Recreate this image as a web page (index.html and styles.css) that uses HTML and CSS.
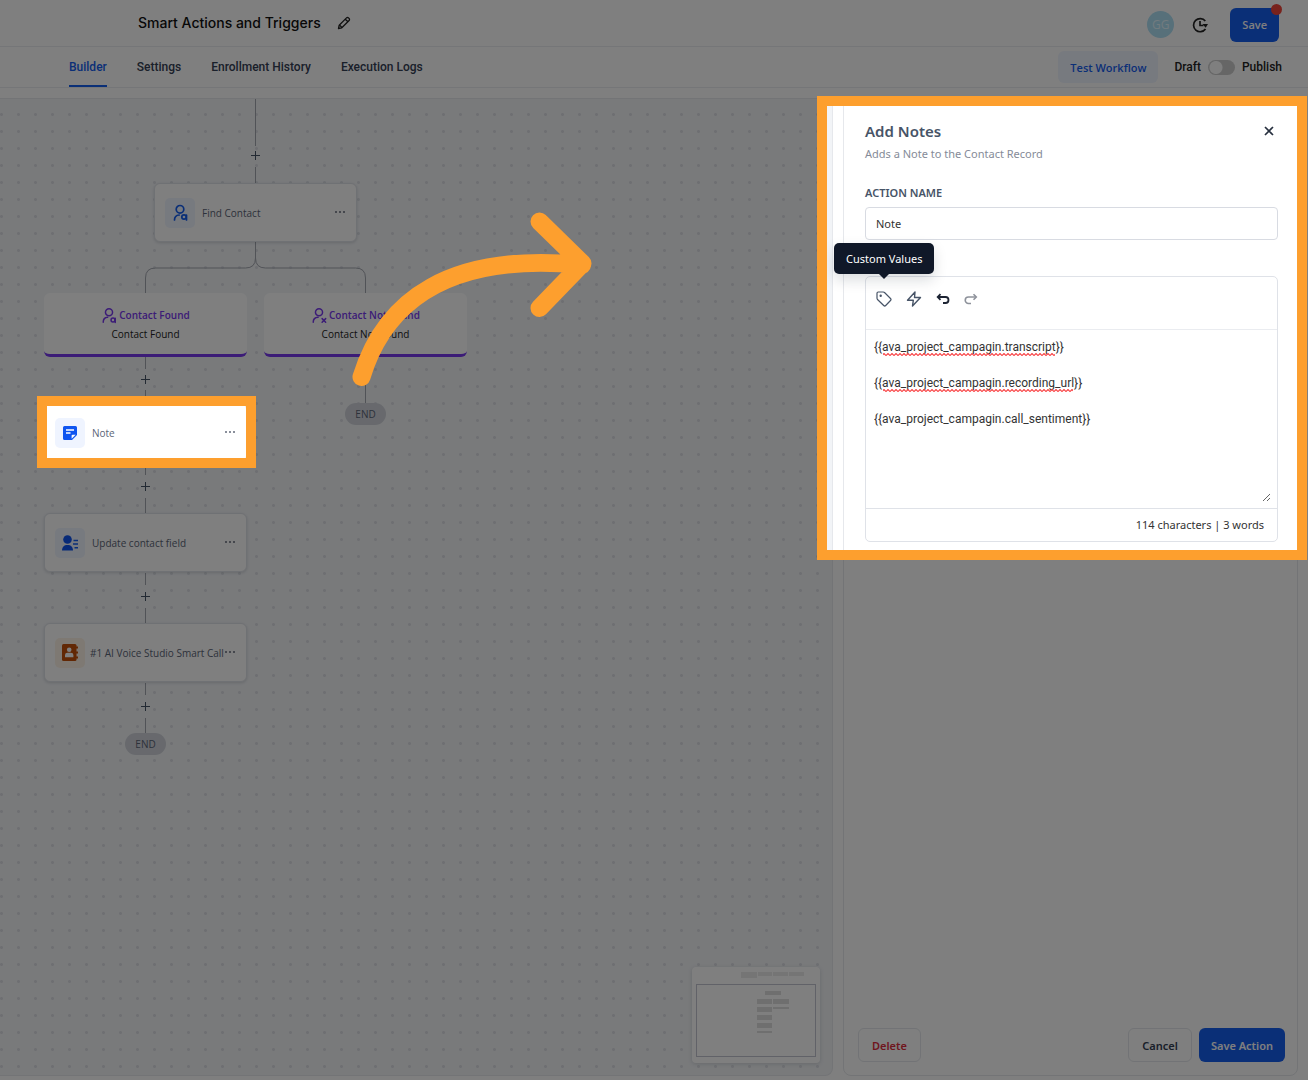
FILE: index.html
```html
<!DOCTYPE html>
<html lang="en">

<head>
    <meta charset="UTF-8">
    <meta name="viewport" content="width=device-width, initial-scale=1.0">
    <title>Smart Actions and Triggers</title>
    <link rel="stylesheet" href="styles.css">
</head>

<body>
    <header class="topbar">
        <h1>Smart Actions and Triggers</h1>
        <button class="icon-button" aria-label="Rename workflow">
            <svg width="14" height="14" viewBox="0 0 14 14" fill="none" stroke="#222" stroke-width="1.3" stroke-linejoin="round"><path d="M1.5 12.5l.7-3.3 7.3-7.3a1.4 1.4 0 0 1 2 0l.6.6a1.4 1.4 0 0 1 0 2L4.800 11.800zM8.300 3.200l2.600 2.600M3 9.500l1.600 1.600"/></svg>
        </button>
        <div class="topbar-right">
            <span class="avatar">GG</span>
            <button class="icon-button" aria-label="Version history">
                <svg width="18" height="18" viewBox="0 0 18 18" fill="none" stroke="#222" stroke-width="1.700"><path d="M14.300 5A6.600 6.600 0 1 0 14.500 13M9 5V9.500h3.500"/><path d="M11.500 8h5.500l-2.300 3.800z" fill="#222" stroke="none"/></svg>
            </button>
            <button class="btn primary save">Save<i class="dot"></i></button>
        </div>
    </header>

    <nav class="tabs">
        <a class="active" href="#builder">Builder</a>
        <a href="#settings">Settings</a>
        <a href="#history">Enrollment History</a>
        <a href="#logs">Execution Logs</a>
        <div class="tabs-right">
            <button class="btn test">Test Workflow</button>
            <div class="publish">
                <label for="publish">Draft</label>
                <input type="checkbox" id="publish" class="switch">
                <label for="publish">Publish</label>
            </div>
        </div>
    </nav>

    <main>
        <section class="canvas" id="builder">
            <svg class="wires" width="500" height="660" fill="none" stroke="#a3a7af" stroke-width="1">
                <path d="M255.500 0V47M255.500 68V85M255.500 143v16q0 10-10 10h-90q-10 0-10 10v16M255.500 143v16q0 10 10 10h90q10 0 10 10v16"/>
                <path d="M145.500 258v12M145.500 291v14M145.500 363v13M145.500 399v16M145.500 474v12M145.500 509v16M145.500 584v12M145.500 619v16M365.500 258v47"/>
            </svg>

            <button class="add add-1" aria-label="Add step"></button>
            <div class="node find">
                <span class="tile">
                    <svg width="18" height="18" viewBox="0 0 18 18" fill="none" stroke="#155eef" stroke-width="1.700" stroke-linecap="round"><circle cx="9" cy="5.300" r="3.800"/><path d="M3.500 16c0-3 2-4.800 4.700-5"/><circle cx="13" cy="13" r="2.200"/><path d="M15.500 11v5"/></svg>
                </span>
                <span class="name">Find Contact</span>
                <button class="more" aria-label="More"></button>
            </div>

            <div class="branch found">
                <strong>
                    <svg width="16" height="17" viewBox="0 0 18 18" fill="none" stroke="#7839ee" stroke-width="1.700" stroke-linecap="round"><circle cx="9" cy="5.300" r="4"/><path d="M2.500 16.500c0-3.500 2-5.300 5-5.500"/><circle cx="13.500" cy="14" r="2.200"/><path d="M16 12v5"/></svg>
                    Contact Found
                </strong>
                <span>Contact Found</span>
            </div>
            <div class="branch not-found">
                <strong>
                    <svg width="16" height="17" viewBox="0 0 18 18" fill="none" stroke="#7839ee" stroke-width="1.700" stroke-linecap="round"><circle cx="9" cy="5.300" r="4"/><path d="M2.500 16.500c0-3.500 2-5.300 5.500-5.500M12.500 12.500l4 4M16.500 12.500l-4 4"/></svg>
                    Contact Not Found
                </strong>
                <span>Contact Not Found</span>
            </div>
            <span class="end end-right">END</span>

            <button class="add add-2" aria-label="Add step"></button>
            <div class="node note">
                <span class="tile">
                    <svg width="14" height="14" viewBox="0 0 14 14"><path d="M1.500 0h11A1.500 1.500 0 0 1 14 1.500V9L9 14H1.500A1.500 1.500 0 0 1 0 12.500v-11A1.500 1.500 0 0 1 1.500 0z" fill="#0f55f0"/><path d="M8.600 12.800V9.800q0-1 1-1h3z" fill="#fff"/><path d="M3 4h8M3 7h4.500" stroke="#fff" stroke-width="1.300"/></svg>
                </span>
                <span class="name">Note</span>
                <button class="more" aria-label="More"></button>
            </div>

            <button class="add add-3" aria-label="Add step"></button>
            <div class="node update">
                <span class="tile">
                    <svg width="18" height="16" viewBox="0 0 18 16" fill="#0f55f0"><circle cx="6.500" cy="4.500" r="4.300"/><path d="M1 15.500c0-3.500 2-5.500 5.500-5.500s5.500 2 5.500 5.500z"/><path d="M12.500 5.500H17M12 9h5M13.500 12.800H17" stroke="#155eef" stroke-width="1.500"/></svg>
                </span>
                <span class="name">Update contact field</span>
                <button class="more" aria-label="More"></button>
            </div>

            <button class="add add-4" aria-label="Add step"></button>
            <div class="node call">
                <span class="tile warm">
                    <svg width="16" height="17" viewBox="0 0 16 17"><rect width="14.500" height="17" rx="1.500" fill="#c4500a"/><path d="M15 2.500v2M15 7.500v2M15 12.500v2" stroke="#c4500a" stroke-width="2"/><circle cx="7.200" cy="5.800" r="2.300" fill="#fff"/><path d="M3 13.200V11q0-2.300 2.500-2.300h3.400q2.500 0 2.500 2.300v2.200z" fill="#fff"/></svg>
                </span>
                <span class="name">#1 AI Voice Studio Smart Call</span>
                <button class="more" aria-label="More"></button>
            </div>

            <button class="add add-5" aria-label="Add step"></button>
            <span class="end end-left">END</span>

            <svg class="arrow" width="250" height="190" viewBox="350 205 250 190" fill="none" stroke="#fd9f2e" stroke-width="18" stroke-linecap="round" stroke-linejoin="round">
                <path d="M361.500 377C385 300 450 252 582 265M539.500 221.500l43 42-43 44.500"/>
            </svg>

            <div class="minimap">
                <svg width="128" height="96" viewBox="0 0 128 96" fill="#dedede">
                    <path d="M49 5h16v6H49zM66 5h14v4H66zM81 5h15v4H81zM97 5h15v4H97z" fill="#ebebeb"/>
                    <path d="M73 24h16v4H73zM65 32h15v5H65zM81 32h16v5H81zM65 40h15v5H65zM81 40h16v2H81zM65 48h15v5H65zM65 56h15v5H65zM65 64h15v2H65z"/>
                    <rect x="4.500" y="17.500" width="119" height="72" fill="none" stroke="#c3c5d0"/>
                </svg>
            </div>
        </section>

        <aside class="panel">
            <div class="panel-head">
                <h2>Add Notes</h2>
                <button class="icon-button" aria-label="Close">
                    <svg width="10" height="10" viewBox="0 0 10 10" stroke="#27303f" stroke-width="1.700"><path d="M1 1l8 8M9 1L1 9"/></svg>
                </button>
            </div>
            <p class="hint">Adds a Note to the Contact Record</p>

            <label class="field-label" for="action-name">ACTION NAME</label>
            <input class="text-input" id="action-name" type="text" value="Note">

            <div class="editor">
                <div class="toolbar">
                    <button class="icon-button" aria-label="Custom Values">
                        <svg width="16" height="16" viewBox="0 0 16 16" fill="none" stroke="#475467" stroke-width="1.200" stroke-linejoin="round"><path d="M1 2.200Q1 1 2.200 1h5q.8 0 1.300.5l6 6q1 1 0 2l-4.800 5q-1 1-2 0l-6.200-6Q1 8 1 7z"/><circle cx="4.700" cy="4.700" r=".6"/></svg>
                    </button>
                    <button class="icon-button" aria-label="Trigger links">
                        <svg width="16" height="16" viewBox="0 0 16 16" fill="none" stroke="#475467" stroke-width="1.400" stroke-linejoin="round"><path d="M9 1L1.500 9.300h5.800L6.500 15 14.500 6.500H8.500z"/></svg>
                    </button>
                    <button class="icon-button" aria-label="Undo">
                        <svg width="14" height="12" viewBox="0 0 14 12" fill="none" stroke="#1d2433" stroke-width="1.800"><path d="M2 4h7.500a3 3 0 0 1 0 6H7"/><path d="M4.500 1.200L1.700 4l2.800 2.800"/></svg>
                    </button>
                    <button class="icon-button" aria-label="Redo">
                        <svg width="14" height="12" viewBox="0 0 14 12" fill="none" stroke="#8e929b" stroke-width="1.600"><path d="M12 4H4.500a3 3 0 0 0 0 6.500H7"/><path d="M9.500 1.200L12.300 4l-2.800 2.800"/></svg>
                    </button>
                    <span class="tooltip">Custom Values</span>
                </div>
                <div class="editor-body">
                    <textarea aria-label="Note" spellcheck="false">{{ava_project_campagin.transcript}}

{{ava_project_campagin.recording_url}}

{{ava_project_campagin.call_sentiment}}</textarea>
                    <svg class="spelling" width="220" height="60">
                        <defs>
                            <pattern id="wave" width="4" height="3" patternUnits="userSpaceOnUse"><path d="M-1 1.500L0 2.500L2 .5l2 2 1-1" fill="none" stroke="#f9484a" stroke-width="1.200"/></pattern>
                        </defs>
                        <rect x="9" width="172" height="3" fill="url(#wave)"/>
                        <rect x="9" y="36" width="190" height="3" fill="url(#wave)"/>
                    </svg>
                </div>
                <div class="counter">114 characters | 3 words</div>
            </div>

            <div class="panel-foot">
                <button class="btn plain danger">Delete</button>
                <button class="btn plain cancel">Cancel</button>
                <button class="btn primary">Save Action</button>
            </div>
        </aside>
    </main>

    <div class="dim"></div>
    <div class="spot spot-note"></div>
    <div class="spot spot-panel"></div>
</body>

</html>
```
FILE: styles.css
```css
* {
    box-sizing: border-box;
}

body {
    margin: 0;
    min-height: 100vh;
    display: flex;
    flex-direction: column;
    position: relative;
    background: #fff;
    color: #344054;
    font-family: "Open Sans", "Noto Sans", sans-serif;
    font-size: 11px;
}

button,
input,
textarea {
    font-family: inherit;
    font-size: 11px;
}

svg {
    display: block;
}

.icon-button {
    border: none;
    background: none;
    padding: 0;
    cursor: pointer;
}

.btn {
    height: 34px;
    border: 1px solid transparent;
    border-radius: 6px;
    padding: 0 11px;
    font-weight: 600;
    cursor: pointer;
}

.primary {
    background: #155eef;
    color: #fff;
}

.plain {
    background: #fff;
    border-color: #e4e7ec;
    padding: 0 13px;
    color: #344054;
}

/* header */
.topbar {
    display: flex;
    align-items: center;
    height: 47px;
    padding: 0 29px 0 138px;
    border-bottom: 1px solid #eaecf0;
}

.topbar h1 {
    margin: 0 16px 0 0;
    font: 500 14px/20px Inter, sans-serif;
    color: #101010;
}

.topbar-right {
    display: flex;
    align-items: center;
    margin-left: auto;
    padding-top: 3px;
}

.avatar {
    width: 27px;
    height: 27px;
    margin-right: 17px;
    border-radius: 50%;
    background: #aee0f5;
    color: #e3f7ff;
    font-size: 12px;
    text-align: center;
    line-height: 27px;
}

.save {
    position: relative;
    margin-left: 21px;
}

.dot {
    position: absolute;
    top: -5px;
    right: -4px;
    width: 11px;
    height: 11px;
    border-radius: 50%;
    background: #f04438;
}

/* tabs */
.tabs {
    display: flex;
    align-items: center;
    gap: 30px;
    height: 41px;
    padding: 0 26px 0 69px;
    border-bottom: 1px solid #eaecf0;
    font: 500 12px/18px Roboto, sans-serif;
}

.tabs a {
    height: 40px;
    line-height: 40px;
    color: #344054;
    text-decoration: none;
}

.tabs .active {
    color: #155eef;
    border-bottom: 2px solid #155eef;
}

.tabs-right {
    display: flex;
    align-items: center;
    gap: 16px;
    margin-left: auto;
}

.test {
    height: 32px;
    background: #eff4ff;
    color: #155eef;
    font-family: "Open Sans", "Noto Sans", sans-serif;
}

.publish {
    display: flex;
    align-items: center;
    gap: 7px;
    color: #222;
}

.switch {
    appearance: none;
    width: 27px;
    height: 15px;
    margin: 0;
    border-radius: 8px;
    background: radial-gradient(circle at 8px 50%, #fff 6px, transparent 7px) #ccc;
}

/* workspace */
main {
    flex: 1;
    display: flex;
    gap: 10px;
    padding: 10px 10px 4px 0;
}

.canvas {
    position: relative;
    flex: 1;
    border: 1px solid #e6e8ec;
    border-left: none;
    border-radius: 0 8px 8px 0;
    background: radial-gradient(circle, #dcdfe5 1px, transparent 2px) -7px 7px / 17px 17px #f2f4f7;
}

.wires {
    position: absolute;
    top: 0;
    left: 0;
}

.node,
.branch {
    position: absolute;
    left: 44px;
    width: 203px;
    height: 59px;
    border: 1px solid #dfe2e8;
    border-radius: 6px;
    background: #fff;
    box-shadow: 0 1px 3px rgba(16, 24, 40, 0.15);
}

.node {
    display: flex;
    align-items: center;
    gap: 7px;
    padding: 0 11px 0 10px;
    font-size: 10px;
    color: #5b6577;
}

.tile {
    display: flex;
    flex: none;
    align-items: center;
    justify-content: center;
    width: 30px;
    height: 30px;
    border-radius: 5px;
    background: #eff4ff;
}

.warm {
    background: #fdf3e7;
}

.name {
    flex: 1;
    white-space: nowrap;
}

.more {
    flex: none;
    width: 11px;
    height: 8px;
    margin-left: -8px;
    padding: 0;
    border: none;
    background: radial-gradient(circle, #8a8f9b 1px, transparent 1px) 0 0 / 4px 6px repeat-x;
}

.find { top: 84px; left: 154px; }
.note { top: 304px; }
.update { top: 414px; }
.call { top: 524px; gap: 5px; }

.branch {
    display: flex;
    flex-direction: column;
    align-items: center;
    gap: 2px;
    height: 64px;
    padding-top: 14px;
    border: none;
    border-bottom: 3px solid #7839ee;
    box-shadow: none;
    font-size: 10px;
    line-height: 17px;
    color: #222;
}

.branch strong {
    display: flex;
    gap: 2px;
    font-weight: 600;
    color: #7839ee;
}

.found { top: 194px; }
.not-found { top: 194px; left: 264px; }

.add {
    position: absolute;
    left: 140px;
    width: 11px;
    height: 11px;
    padding: 0;
    border: none;
    background:
        linear-gradient(#475467, #475467) center / 9px 1px no-repeat,
        linear-gradient(#475467, #475467) center / 1px 9px no-repeat;
}

.add-1 { top: 51px; left: 250px; }
.add-2 { top: 275px; }
.add-3 { top: 382px; }
.add-4 { top: 492px; }
.add-5 { top: 602px; }

.end {
    position: absolute;
    width: 41px;
    height: 22px;
    border-radius: 11px;
    background: #d0d3da;
    color: #5b6577;
    font-size: 10px;
    line-height: 22px;
    text-align: center;
}

.end-right { top: 304px; left: 345px; }
.end-left { top: 634px; left: 125px; }

.arrow {
    position: absolute;
    top: 106px;
    left: 350px;
    z-index: 3;
}

.minimap {
    position: absolute;
    right: 12px;
    bottom: 12px;
    border-radius: 4px;
    background: #fff;
    box-shadow: 0 1px 4px rgba(16, 24, 40, 0.15);
}

/* side panel */
.panel {
    display: flex;
    flex-direction: column;
    width: 455px;
    padding: 22px 19px 13px 21px;
    border: 1px solid #e6e8ec;
    border-radius: 8px;
    font-family: "Noto Sans", "Open Sans", sans-serif;
}

.panel-head {
    display: flex;
    align-items: center;
    justify-content: space-between;
    padding-right: 4px;
}

.panel h2 {
    margin: 0;
    font-size: 15px;
    font-weight: 600;
    line-height: 20px;
    color: #475467;
}

.hint {
    margin: 4px 0 21px;
    line-height: 18px;
    color: #858b98;
}

.field-label {
    margin-bottom: 5px;
    font-weight: 600;
    line-height: 18px;
    color: #475467;
}

.text-input {
    height: 33px;
    padding: 0 10px;
    border: 1px solid #d8dbe2;
    border-radius: 4px;
    color: #333;
}

.editor {
    margin-top: 36px;
    border: 1px solid #dfe2e8;
    border-radius: 5px;
}

.toolbar {
    position: relative;
    display: flex;
    align-items: center;
    gap: 14px;
    height: 53px;
    padding: 0 10px 8px;
    border-bottom: 1px solid #eaecf0;
}

.tooltip {
    position: absolute;
    top: -34px;
    left: -32px;
    padding: 0 12px;
    border-radius: 5px;
    background: #101828;
    color: #fff;
    line-height: 31px;
    box-shadow: 0 6px 14px rgba(16, 24, 40, 0.15);
}

.tooltip::after {
    content: "";
    position: absolute;
    top: 31px;
    left: 45px;
    border: 5px solid transparent;
    border-top-color: #101828;
    border-bottom: none;
}

.editor-body {
    position: relative;
    padding: 8px 6px 6px 8px;
}

.editor-body textarea {
    display: block;
    width: 100%;
    height: 164px;
    padding: 0;
    border: none;
    outline: none;
    resize: vertical;
    font-family: Roboto, sans-serif;
    font-size: 12px;
    line-height: 18px;
    color: #333;
}

.spelling {
    position: absolute;
    top: 23px;
    left: 8px;
    pointer-events: none;
}

.counter {
    padding: 0 13px;
    border-top: 1px solid #dfe2e8;
    line-height: 32px;
    text-align: right;
    color: #333;
}

.panel-foot {
    display: flex;
    gap: 7px;
    margin: auto -7px 0 -7px;
}

.plain.danger {
    color: #e02d3c;
}

.cancel {
    margin-left: auto;
}

/* walkthrough layer: everything is dimmed except the two spots */
.dim {
    position: absolute;
    inset: 0;
    z-index: 2;
    background: rgba(0, 0, 0, 0.5);
    pointer-events: none;
    clip-path: polygon(evenodd,
        0 0, 100% 0, 100% 100%, 0 100%, 0 0,
        47px 406px, 246px 406px, 246px 458px, 47px 458px, 47px 406px, 0 0,
        calc(100% - 481px) 106px, calc(100% - 11px) 106px, calc(100% - 11px) 550px, calc(100% - 481px) 550px, calc(100% - 481px) 106px, 0 0);
}

.spot {
    position: absolute;
    z-index: 3;
    border: 10px solid #fd9f2e;
    pointer-events: none;
}

.spot-note {
    top: 396px;
    left: 37px;
    width: 219px;
    height: 72px;
}

.spot-panel {
    top: 96px;
    right: 1px;
    width: 490px;
    height: 464px;
}
```
